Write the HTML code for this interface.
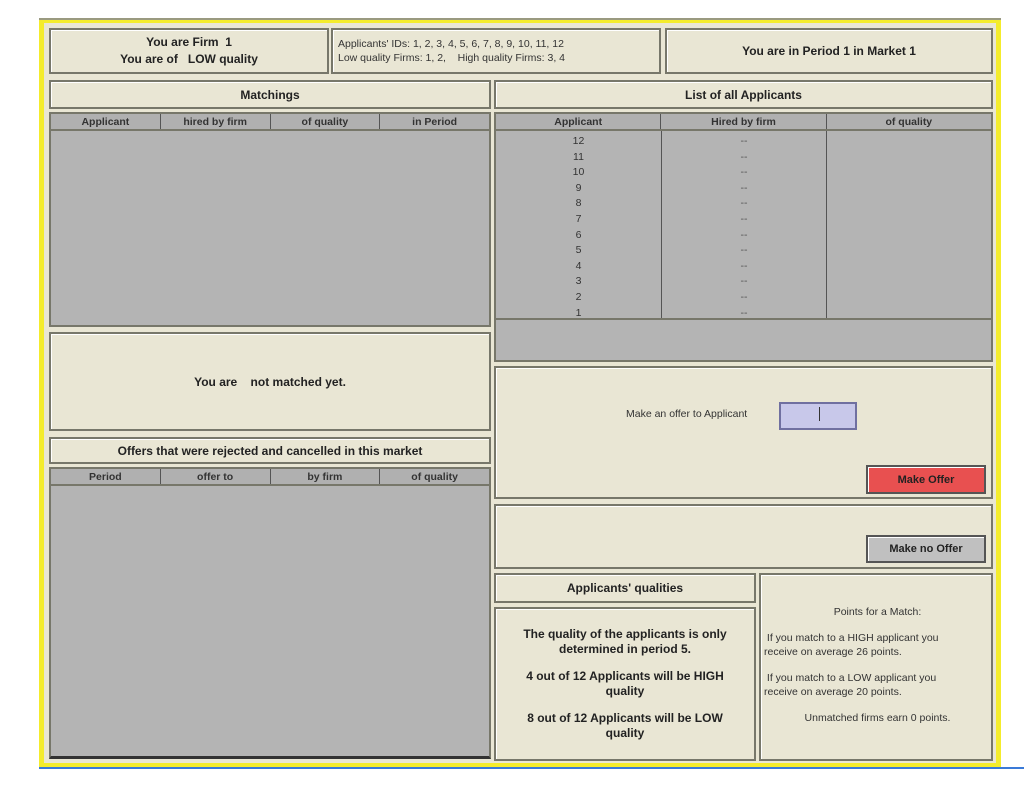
<!DOCTYPE html>
<html><head><style>
*{margin:0;padding:0;box-sizing:border-box}
body{width:1024px;height:805px;background:#fff;position:relative;font-family:"Liberation Sans",Arial,sans-serif;color:#222;overflow:hidden}
.a{position:absolute}
.frame{left:39px;top:18px;width:962px;height:750px;background:#f4ec2c;border-top:2px solid #9a9a80}
.inner{left:44px;top:23px;width:952px;height:740px;background:#e9e6d4}
.blue{left:39px;top:767px;width:985px;height:2px;background:#3a7ad8}
.box{position:absolute;background:#e9e6d4;border:2px solid #77776a;box-shadow:inset 1px 1px 0 #fff}
.c{display:flex;align-items:center;justify-content:center;text-align:center}
.b{font-weight:bold;font-size:12px}
.s{font-size:10.5px}
.tbl{position:absolute;background:#b4b4b4;border:2px solid #77776a}
.hdr{position:absolute;top:0;left:0;right:0;height:17px;display:flex;border-bottom:2px solid #77776a;background:#b0b0b0}
.hdr div{flex:1;border-right:1px solid #555;font-size:10.5px;font-weight:bold;text-align:center;line-height:16px;color:#333}
.hdr div:last-child{border-right:none}
.btn{position:absolute;border:2px solid #555;box-shadow:inset 1px 1px 0 #fff;font-size:11px;font-weight:bold;display:flex;align-items:center;justify-content:center}
</style></head><body>
<div class="a frame"></div>
<div class="a inner"></div>
<div class="a blue"></div>

<div class="box c b" style="left:49px;top:28px;width:280px;height:46px;line-height:17px">You are Firm &nbsp;1<br>You are of &nbsp;&nbsp;LOW quality</div>
<div class="box s" style="left:331px;top:28px;width:330px;height:46px;padding:7px 0 0 5px;line-height:14px;color:#333">Applicants' IDs: 1, 2, 3, 4, 5, 6, 7, 8, 9, 10, 11, 12<br>Low quality Firms: 1, 2, &nbsp;&nbsp;&nbsp;High quality Firms: 3, 4</div>
<div class="box c b" style="left:665px;top:28px;width:328px;height:46px">You are in Period 1 in Market 1</div>

<div class="box c b" style="left:49px;top:80px;width:442px;height:29px">Matchings</div>
<div class="box c b" style="left:494px;top:80px;width:499px;height:29px">List of all Applicants</div>

<div class="tbl" style="left:49px;top:112px;width:442px;height:215px"><div class="hdr"><div>Applicant</div><div>hired by firm</div><div>of quality</div><div>in Period</div></div></div>

<div class="tbl" style="left:494px;top:112px;width:499px;height:250px">
<div class="hdr"><div>Applicant</div><div>Hired by firm</div><div>of quality</div></div>
<div class="a" style="left:165px;top:17px;width:1px;height:188px;background:#555"></div>
<div class="a" style="left:330px;top:17px;width:1px;height:188px;background:#555"></div>
<div class="a" style="left:0;top:204px;width:495px;height:2px;background:#77776a"></div>
<div class="a" style="left:0;top:20px;width:165px;font-size:10.5px;line-height:15.6px;text-align:center;color:#333">12<br>11<br>10<br>9<br>8<br>7<br>6<br>5<br>4<br>3<br>2<br>1</div>
<div class="a" style="left:166px;top:20px;width:164px;font-size:10.5px;line-height:15.6px;text-align:center;color:#555">--<br>--<br>--<br>--<br>--<br>--<br>--<br>--<br>--<br>--<br>--<br>--</div>
</div>

<div class="box c b" style="left:49px;top:332px;width:442px;height:99px">You are &nbsp;&nbsp;&nbsp;not matched yet.</div>
<div class="box c b" style="left:49px;top:437px;width:442px;height:27px">Offers that were rejected and cancelled in this market</div>
<div class="tbl" style="left:49px;top:467px;width:442px;height:292px;border-bottom:3px solid #333"><div class="hdr"><div>Period</div><div>offer to</div><div>by firm</div><div>of quality</div></div></div>

<div class="box" style="left:494px;top:366px;width:499px;height:133px">
<div class="a s" style="left:130px;top:40px;color:#333">Make an offer to Applicant</div>
<div class="a" style="left:283px;top:34px;width:78px;height:28px;background:#c8c8ea;border:2px solid #7070a0"><div class="a" style="left:38px;top:3px;width:1px;height:14px;background:#333"></div></div>
</div>
<div class="btn" style="left:866px;top:465px;width:120px;height:29px;background:#e85050">Make Offer</div>

<div class="box" style="left:494px;top:504px;width:499px;height:65px"></div>
<div class="btn" style="left:866px;top:535px;width:120px;height:28px;background:#c0c0c0">Make no Offer</div>

<div class="box c b" style="left:494px;top:573px;width:262px;height:30px">Applicants' qualities</div>
<div class="box b" style="left:494px;top:607px;width:262px;height:154px;text-align:center;padding:18px 16px 0;line-height:15px">The quality of the applicants is only determined in period 5.<div style="height:12px"></div>4 out of 12 Applicants will be HIGH quality<div style="height:12px"></div>8 out of 12 Applicants will be LOW quality</div>
<div class="box s" style="left:759px;top:573px;width:234px;height:188px;color:#333;line-height:14px;padding:30px 0 0 3px">
<div style="text-align:center">Points for a Match:</div><div style="height:12px"></div>
&nbsp;If you match to a HIGH applicant you<br>receive on average 26 points.<div style="height:12px"></div>
&nbsp;If you match to a LOW applicant you<br>receive on average 20 points.<div style="height:12px"></div>
<div style="text-align:center">Unmatched firms earn 0 points.</div></div>
</body></html>
